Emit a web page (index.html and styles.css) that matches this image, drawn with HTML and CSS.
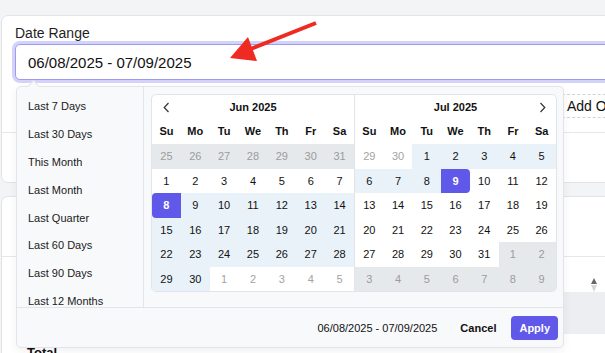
FILE: index.html
```html
<!DOCTYPE html>
<html lang="en">
<head>
  <meta charset="UTF-8" />
  <meta name="viewport" content="width=device-width, initial-scale=1" />
  <title>Report Filters</title>
  <link rel="stylesheet" href="styles.css">
</head>
<body>
  <div class="page">

    <section class="card filter-card">
      <div class="card-body">
        <label class="field-label" for="range">Date Range</label>
        <input class="range-input" id="range" type="text" value="06/08/2025 - 07/09/2025">
        <div class="filter-row">
          <div class="add-filter">Add Other Filter</div>
        </div>
      </div>
      <div class="card-rule"></div>

      <!-- date range dropdown, open -->
      <div class="picker">
        <div class="picker-body">
          <ul class="presets">
            <li>Last 7 Days</li>
            <li>Last 30 Days</li>
            <li>This Month</li>
            <li>Last Month</li>
            <li>Last Quarter</li>
            <li>Last 60 Days</li>
            <li>Last 90 Days</li>
            <li>Last 12 Months</li>
            <li>Year to Date</li>
          </ul>

          <div class="months-wrap">
            <div class="months">
              <div class="month">
                <div class="month-head">
                  <span class="nav">
                    <svg width="7" height="11" viewBox="0 0 7 11"><polyline points="5.5,1 1.2,5.5 5.5,10" /></svg>
                  </span>
                  <span class="month-title">Jun 2025</span>
                  <span class="nav"></span>
                </div>
                <div class="weekdays">
                  <span>Su</span><span>Mo</span><span>Tu</span><span>We</span><span>Th</span><span>Fr</span><span>Sa</span>
                </div>
                <div class="days">
                  <span class="out">25</span><span class="out">26</span><span class="out">27</span><span class="out">28</span><span class="out">29</span><span class="out">30</span><span class="out">31</span>
                  <span>1</span><span>2</span><span>3</span><span>4</span><span>5</span><span>6</span><span>7</span>
                  <span class="sel start">8</span><span class="in">9</span><span class="in">10</span><span class="in">11</span><span class="in">12</span><span class="in">13</span><span class="in">14</span>
                  <span class="in">15</span><span class="in">16</span><span class="in">17</span><span class="in">18</span><span class="in">19</span><span class="in">20</span><span class="in">21</span>
                  <span class="in">22</span><span class="in">23</span><span class="in">24</span><span class="in">25</span><span class="in">26</span><span class="in">27</span><span class="in">28</span>
                  <span class="in">29</span><span class="in">30</span><span class="muted">1</span><span class="muted">2</span><span class="muted">3</span><span class="muted">4</span><span class="muted">5</span>
                </div>
              </div>

              <div class="month">
                <div class="month-head">
                  <span class="nav"></span>
                  <span class="month-title">Jul 2025</span>
                  <span class="nav">
                    <svg width="7" height="11" viewBox="0 0 7 11"><polyline points="1.5,1 5.8,5.5 1.5,10" /></svg>
                  </span>
                </div>
                <div class="weekdays">
                  <span>Su</span><span>Mo</span><span>Tu</span><span>We</span><span>Th</span><span>Fr</span><span>Sa</span>
                </div>
                <div class="days">
                  <span class="muted">29</span><span class="muted">30</span><span class="in">1</span><span class="in">2</span><span class="in">3</span><span class="in">4</span><span class="in">5</span>
                  <span class="in">6</span><span class="in">7</span><span class="in">8</span><span class="sel end">9</span><span>10</span><span>11</span><span>12</span>
                  <span>13</span><span>14</span><span>15</span><span>16</span><span>17</span><span>18</span><span>19</span>
                  <span>20</span><span>21</span><span>22</span><span>23</span><span>24</span><span>25</span><span>26</span>
                  <span>27</span><span>28</span><span>29</span><span>30</span><span>31</span><span class="out">1</span><span class="out">2</span>
                  <span class="out">3</span><span class="out">4</span><span class="out">5</span><span class="out">6</span><span class="out">7</span><span class="out">8</span><span class="out">9</span>
                </div>
              </div>
            </div>
          </div>
        </div>

        <div class="picker-foot">
          <span class="picked">06/08/2025 - 07/09/2025</span>
          <button class="btn-cancel" type="button">Cancel</button>
          <button class="btn-apply" type="button">Apply</button>
        </div>
      </div>
    </section>

    <section class="card table-card">
      <div class="table-top"></div>
      <div class="sort-row"><span class="sort"><i class="up"></i><i class="down"></i></span></div>
      <div class="shade-row"></div>
      <div class="total-row">Total</div>
    </section>

    <!-- annotation arrow -->
    <svg class="arrow" width="605" height="353" viewBox="0 0 605 353">
      <line x1="316" y1="23" x2="248" y2="50" />
      <polygon points="230,58 248,37 257,61" />
    </svg>
  </div>
</body>
</html>
```

FILE: styles.css
```css
* {
  margin: 0; padding: 0; box-sizing: border-box;
}
body {
  font-family: 'Liberation Sans', Arial, sans-serif;
  background-color: #f3f4f6;
  color: #111;
  overflow: hidden;
}
.page {
  position: relative;
  width: 605px;
  height: 353px;
  padding: 15px 0 0 1px;
  overflow: hidden;
}
.card {
  width: 700px;
  background: #fff;
  border: 1px solid #e2e4e8;
  border-radius: 7px;
}
.filter-card {
  position: relative;
  height: 168px;
  z-index: 2;
}
.card-body {
  padding: 9px 0 0 13px;
}
.field-label {
  display: block;
  font-size: 14px;
  line-height: 17px;
  color: #1f1f1f;
}
.range-input {
  display: block;
  margin-top: 2px;
  width: 680px;
  height: 36px;
  padding: 0 12px;
  font-family: 'Liberation Sans', Arial, sans-serif;
  font-size: 15px;
  color: #111;
  border: 1px solid #9d9af2;
  border-radius: 5px;
  box-shadow: 0 0 0 3px #d3d3fa;
  outline: none;
}
.filter-row {
  margin-top: 14px;
  height: 24px;
  display: flex;
}
.add-filter {
  margin-left: 547px;
  padding-left: 4px;
  font-size: 14px;
  line-height: 22px;
  border: 1px dashed #cfd3d8;
  white-space: nowrap;
}
.card-rule {
  margin-top: 14px;
  border-top: 1px solid #e5e7eb;
}

/* dropdown */
.picker {
  position: absolute;
  left: 14px;
  top: 70px;
  width: 548px;
  height: 262px;
  display: flex;
  flex-direction: column;
  background: #f8f9fb;
  border: 1px solid #e1e4e8;
  border-radius: 5px;
  box-shadow: 0 3px 10px rgb(0 0 0 / 0.06);
  font-size: 11px;
  color: #111;
}
.picker::before {
  content: '';
  position: absolute;
  left: 12px;
  top: -5px;
  width: 8px;
  height: 8px;
  background: #f8f9fb;
  border-top: 1px solid #e1e4e8;
  border-left: 1px solid #e1e4e8;
  transform: rotate(45deg);
}
.picker-body {
  display: flex;
  height: 220px;
}
.presets {
  list-style: none;
  width: 127px;
  flex-shrink: 0;
  padding-top: 6px;
  border-right: 1px solid #e1e4e8;
  overflow: hidden;
}
.presets li {
  height: 27.9px;
  line-height: 27.9px;
  padding-left: 11px;
  color: #1a1a1a;
  white-space: nowrap;
}
.months-wrap {
  padding: 7px 0 0 7px;
}
.months {
  display: flex;
  background: #fff;
  border: 1px solid #e1e4e8;
  border-radius: 5px;
  overflow: hidden;
}
.month {
  width: 202px;
}
.month + .month {
  border-left: 1px solid #e1e4e8;
}
.month-head {
  display: grid;
  grid-template-columns: 28px 1fr 28px;
  align-items: center;
  height: 24px;
}
.month-title {
  text-align: center;
  font-weight: bold;
}
.nav {
  display: flex;
  justify-content: center;
}
.nav svg polyline {
  fill: none;
  stroke: #333;
  stroke-width: 1.2;
}
.weekdays,
.days {
  display: grid;
  grid-template-columns: repeat(7, 1fr);
  text-align: center;
}
.weekdays span {
  height: 25px;
  line-height: 25px;
  font-weight: bold;
}
.days span {
  height: 24.5px;
  line-height: 24.5px;
}
.days .out {
  background: #e6e9ec;
  color: #9b9b9b;
}
.days .muted {
  color: #a3a3a3;
}
.days .in {
  background: #e9f2f8;
}
.days .sel {
  background: #5f58e8;
  color: #fff;
  font-weight: bold;
}
.days .start {
  border-radius: 4px 0 0 4px;
}
.days .end {
  border-radius: 0 4px 4px 0;
}

.picker-foot {
  height: 40px;
  display: flex;
  align-items: center;
  justify-content: flex-end;
  padding-right: 5px;
  border-top: 1px solid #e1e4e8;
}
.picked {
  margin-right: 23px;
}
.btn-cancel,
.btn-apply {
  font-family: 'Liberation Sans', Arial, sans-serif;
  font-size: 11px;
  font-weight: bold;
  border: none;
  background: none;
  color: #111;
}
.btn-cancel {
  margin-right: 15px;
}
.btn-apply {
  height: 24px;
  padding: 0 8px;
  border-radius: 4px;
  background: #5f58e8;
  color: #fff;
}

/* table card behind the dropdown */
.table-card {
  margin-top: 13px;
  height: 200px;
}
.table-top {
  height: 60px;
  border-bottom: 1px solid #e5e7eb;
}
.sort-row {
  height: 35px;
  padding: 21px 0 0 589px;
}
.sort {
  display: flex;
  flex-direction: column;
  gap: 1px;
  width: 6px;
}
.sort i {
  display: block;
  width: 0;
  height: 0;
  border-left: 3px solid transparent;
  border-right: 3px solid transparent;
}
.sort .up {
  border-bottom: 6px solid #666;
}
.sort .down {
  border-top: 7px solid #d6d6d6;
}
.shade-row {
  height: 42px;
  margin-left: 16px;
  background: #eceef1;
}
.total-row {
  padding: 11px 0 0 25px;
  font-size: 13px;
  line-height: 16px;
  font-weight: bold;
}

.arrow {
  position: absolute;
  left: 0;
  top: 0;
  z-index: 5;
  pointer-events: none;
}
.arrow line {
  stroke: #ef2a21;
  stroke-width: 4;
}
.arrow polygon {
  fill: #ef2a21;
}
```
